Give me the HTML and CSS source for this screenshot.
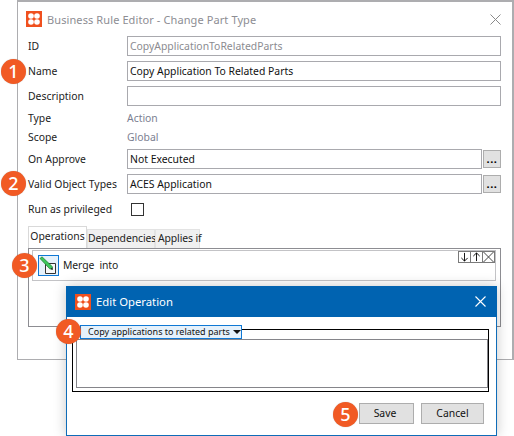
FILE: index.html
```html
<!DOCTYPE html>
<html lang="en">
<head>
<meta charset="utf-8">
<title>Business Rule Editor</title>
<link rel="stylesheet" href="styles.css">
</head>
<body>
<div class="stage">
  <section class="dialog">
    <header class="titlebar">
      <svg class="logo" viewBox="0 0 16 16"><rect width="16" height="16" fill="#f0501e"/><g fill="#fff"><circle cx="5" cy="5" r="2.800"/><circle cx="11" cy="5" r="2.800"/><circle cx="5" cy="11" r="2.800"/><circle cx="11" cy="11" r="2.800"/></g></svg>
      <span class="title">Business Rule Editor - Change Part Type</span>
      <svg class="close" viewBox="0 0 11 11"><path d="M.5.5l10 10M10.500.5l-10 10" stroke="#8a8a8a" fill="none"/></svg>
    </header>
    <div class="form">
      <div class="row"><label class="lbl">ID</label><div class="field muted">CopyApplicationToRelatedParts</div></div>
      <div class="row"><label class="lbl">Name</label><div class="field">Copy Application To Related Parts</div></div>
      <div class="row"><label class="lbl">Description</label><div class="field"></div></div>
      <div class="row info"><span class="lbl">Type</span><span class="val">Action</span></div>
      <div class="row info"><span class="lbl">Scope</span><span class="val">Global</span></div>
      <div class="row"><label class="lbl">On Approve</label><div class="field">Not Executed</div><button class="dots">...</button></div>
      <div class="row"><label class="lbl">Valid Object Types</label><div class="field">ACES Application</div><button class="dots">...</button></div>
      <div class="row check"><label class="lbl">Run as privileged</label><span class="box"></span></div>
    </div>
    <div class="tabs">
      <span class="tab active">Operations</span>
      <span class="tab dep">Dependencies</span>
      <span class="tab app">Applies if</span>
    </div>
    <div class="panel">
      <div class="op">
        <span class="opicon"><svg viewBox="0 0 19 19" width="19" height="19"><path d="M6.500 7.500h10v10h-10z" fill="#f7f7f7" stroke="#333"/><path d="M1 2.500L3 .8l10.500 10-.4 2.400-2.400-.4z" fill="#3cc65a" stroke="#1d7a30" stroke-width=".7"/><path d="M11.500 13l2.500 1-.8-2.600z" fill="#222"/></svg></span>
        <span class="optext">Merge&nbsp; into</span>
        <div class="tools">
          <span class="tool"><svg viewBox="0 0 11 11"><path d="M5.500 1v9M2 6.500l3.500 3.500L9 6.500" fill="none" stroke="#000"/></svg></span>
          <span class="tool"><svg viewBox="0 0 11 11"><path d="M5.500 10V1M2 4.500L5.500 1 9 4.500" fill="none" stroke="#000"/></svg></span>
          <span class="tool"><svg viewBox="0 0 11 11"><path d="M0 0l11 11M11 0L0 11" fill="none" stroke="#333"/></svg></span>
        </div>
      </div>
    </div>
  </section>

  <section class="modal">
    <header class="modalbar">
      <svg class="mlogo" viewBox="0 0 16 16"><rect width="16" height="16" fill="#f0501e"/><g fill="#fff"><circle cx="5" cy="5" r="2.800"/><circle cx="11" cy="5" r="2.800"/><circle cx="5" cy="11" r="2.800"/><circle cx="11" cy="11" r="2.800"/></g></svg>
      <span class="mtitle">Edit Operation</span>
      <svg class="mclose" viewBox="0 0 11 11"><path d="M.5.5l10 10M10.500.5l-10 10" stroke="#fff" stroke-width="1.100" fill="none"/></svg>
    </header>
    <div class="mbody">
      <div class="group">
        <div class="combo"><span>Copy applications to related parts</span><i class="arrow"></i></div>
        <div class="area"></div>
      </div>
      <div class="actions">
        <button class="btn save">Save</button>
        <button class="btn cancel">Cancel</button>
      </div>
    </div>
  </section>

  <span class="badge b1">1</span>
  <span class="badge b2">2</span>
  <span class="badge b3">3</span>
  <span class="badge b4">4</span>
  <span class="badge b5">5</span>
</div>
</body>
</html>
```
FILE: styles.css
```css
* { box-sizing: border-box; }
html, body { margin: 0; padding: 0; background: #fff; }
body { font: 10.4px "Noto Sans", "Open Sans", sans-serif; color: #222; overflow: hidden; white-space: nowrap; }
.stage { position: relative; width: 514px; height: 436px; }

.dialog { margin-left: 17px; width: 497px; height: 360px; border: 2px solid #adadb0; border-bottom-width: 1px; border-left-width: 1px; background: #fff; padding-right: 11px; }
.titlebar { height: 34px; display: flex; align-items: center; padding-left: 8px; }
.logo { width: 16px; height: 16px; }
.title { margin-left: 5px; font-size: 11px; letter-spacing: .1px; color: #8d8d93; }
.close { width: 11px; height: 11px; margin-left: auto; }

.form { padding-left: 10px; display: flex; flex-direction: column; gap: 5px; }
.row { display: flex; align-items: center; height: 20px; }
.lbl { width: 99px; flex: none; color: #222; padding-bottom: 1px; }
.field { flex: 1; height: 20px; border: 1px solid #a9a9ae; padding: 0 2px; line-height: 18px; color: #111; }
.field.muted { color: #8b8b90; }
.info { height: 14px; }
.val { color: #7b8091; padding-bottom: 1px; }
.dots { width: 18px; height: 18px; margin-left: 1px; padding: 0; border: 1px solid #adadad; background: #e1e1e1; font: bold 11px/16px "Noto Sans", sans-serif; letter-spacing: .6px; color: #000; }
.check { margin-top: 4px; height: 13px; }
.box { width: 13px; height: 13px; margin-left: 4px; border: 1px solid #333; background: #fff; }

.tabs { margin: 10px 0 0 10px; height: 22px; display: flex; align-items: flex-end; }
.tab { height: 19px; line-height: 17px; background: #f0f0f0; border: 1px solid #e3e3e3; border-bottom: 0; text-align: center; color: #222; letter-spacing: -.1px; }
.tab.active { height: 22px; width: 59px; background: #fff; line-height: 19px; border-color: #d9d9d9; letter-spacing: 0; }
.tab.dep { width: 68px; }
.tab.app { width: 45px; padding-left: 2px; }

.panel { margin-left: 10px; height: 79px; border: 1px solid #8d8d92; padding: 1px 4px 0 3px; }
.op { position: relative; height: 31px; border: 1px solid #c3c3c6; display: flex; align-items: center; padding-left: 5px; }
.opicon { width: 21px; height: 21px; border: 1px solid #0f78d4; background: #e5f1fb; display: flex; align-items: center; justify-content: center; }
.optext { margin-left: 4px; color: #222; padding-bottom: 1px; letter-spacing: -.1px; }
.tools { position: absolute; top: 0; right: 0; display: flex; }
.tool { width: 12px; height: 12px; border: 1px solid #7a7a7a; border-left-width: 0; background: #fff; display: block; }
.tool:first-child { border-left-width: 1px; width: 13px; }
.tool svg { display: block; width: 100%; height: 100%; }

.modal { position: absolute; left: 66px; top: 286px; width: 431px; height: 150px; background: #fff; border: 1px solid #0f6cb8; border-top: 0; box-shadow: 0 0 12px rgba(0,0,0,.22); }
.modalbar { height: 31px; margin: 0 -1px; background: #0063b1; display: flex; align-items: center; padding: 0 11px 0 9px; color: #fff; }
.mlogo { width: 16px; height: 16px; }
.mtitle { margin-left: 5px; font-size: 11.3px; }
.mclose { width: 11px; height: 11px; margin-left: auto; }

.mbody { padding: 12px 7px 0 5px; }
.group { position: relative; height: 63px; border: 1px solid #000; }
.combo { position: absolute; left: 7px; top: -5px; width: 162px; height: 14px; padding: 0 0 1px 7px; border: 1px solid #0f78d4; background: #e5f1fb; display: flex; align-items: center; font-size: 9px; color: #111; }
.arrow { margin-left: auto; margin-right: 0; width: 0; height: 0; border: 4px solid transparent; border-top-color: #111; border-bottom: 0; }
.area { position: absolute; left: 3px; right: 0; top: 9px; height: 49px; border: 1px solid #85858a; background: #fff; }

.actions { display: flex; justify-content: flex-end; gap: 7px; margin-top: 11px; padding-right: 5px; }
.btn { height: 21px; border: 1px solid #adadad; background: #e1e1e1; font: 10.4px "Noto Sans", sans-serif; color: #111; padding: 0 0 2px; }
.save { width: 55px; padding-right: 3px; }
.cancel { width: 63px; }

.badge { position: absolute; width: 25px; height: 25px; border-radius: 50%; background: #f15a24; color: #fff; font: 500 18px/25px "Noto Sans", sans-serif; text-align: center; box-shadow: 0 0 1px rgba(0,0,0,.3); z-index: 5; }
.b1 { left: 1px; top: 59px; }
.b2 { left: 1px; top: 171px; }
.b3 { left: 12px; top: 253px; }
.b4 { left: 56px; top: 319px; }
.b5 { left: 333px; top: 402px; }
```
